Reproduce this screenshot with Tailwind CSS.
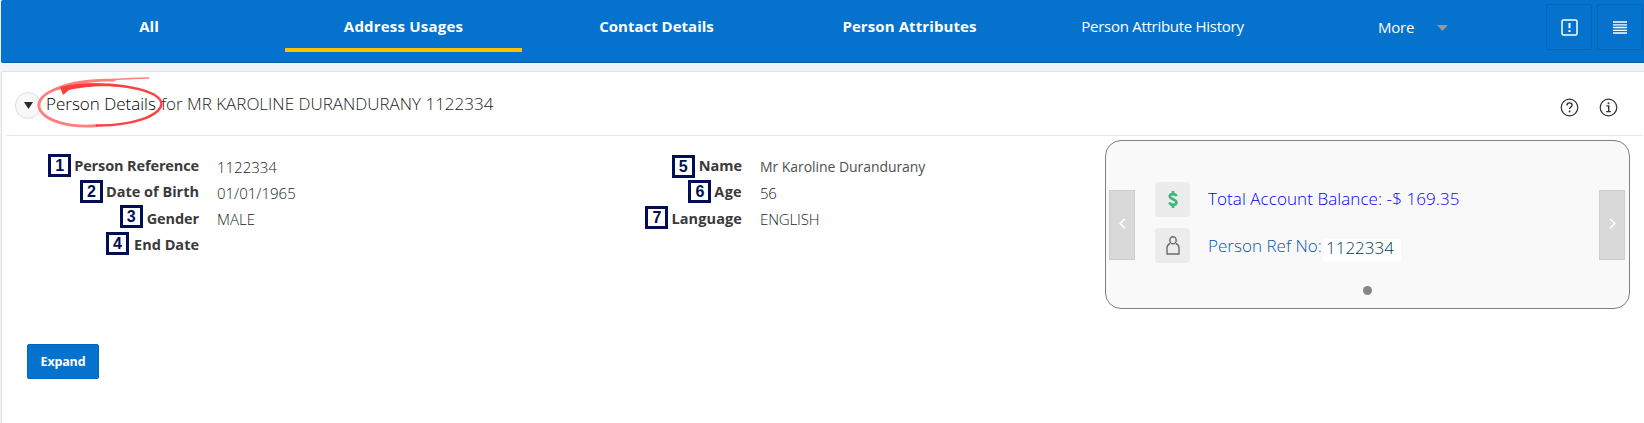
<!DOCTYPE html>
<html lang="en">
  <head>
    <meta charset="UTF-8" />
    <meta name="viewport" content="width=device-width, initial-scale=1.0" />
    <title>Person Details</title>
    <script src="https://cdn.jsdelivr.net/npm/@tailwindcss/browser@4"></script>
  </head>
  <body class="h-[423px] overflow-hidden bg-[#f0f4f9] font-['Open_Sans',sans-serif] text-[15px] text-[#3a3a3a]">
    <!-- Tab bar -->
    <header class="ml-px flex h-[63px] rounded-l-xs border-b border-[#0561ae] bg-[#0572ce] text-white">
      <nav class="ml-[23px] grid w-[1265px] grid-cols-5 text-center font-bold leading-6 whitespace-nowrap">
        <a class="mr-[11px] ml-2 h-[52px] pt-3.5">All</a>
        <a class="mx-2 h-[52px] border-b-4 border-[#ffc000] pt-3.5 tracking-[0.2px]">Address Usages</a>
        <a class="mx-2 h-[52px] pt-3.5">Contact Details</a>
        <a class="mx-2 h-[52px] pt-3.5 tracking-[0.1px]">Person Attributes</a>
        <a class="mx-2 h-[52px] pt-3.5 font-normal tracking-[-0.28px]">Person Attribute History</a>
      </nav>
      <div class="ml-[89px] flex h-6 w-[168px] pt-[15px] leading-6">
        <span class="w-[59px] tracking-[-0.2px]">More</span>
        <svg class="mt-[10px] h-[6px] w-[11px]" viewBox="0 0 11 6"><path d="M0 0h11L5.5 6z" fill="#999" /></svg>
      </div>
      <div class="mt-1 flex gap-[5px]">
        <button class="flex h-[46px] w-[46px] items-center justify-center rounded-xs border border-[#0564b5]">
          <svg class="h-[17px] w-[17px]" viewBox="0 0 17 17" fill="none" stroke="#fff">
            <rect x="1" y="1" width="15" height="15" rx="1.5" stroke-width="1.5" />
            <path d="M8.5 4v5.2M8.5 11v2" stroke-width="2" />
          </svg>
        </button>
        <button class="flex h-[46px] w-[46px] items-center justify-center rounded-xs border border-[#0564b5]">
          <svg class="h-[13px] w-[14px]" viewBox="0 0 14 13" fill="none" stroke="#fff" stroke-width="1.3">
            <path d="M0 1h14M0 3.8h14M0 6.5h14M0 9.3h14M0 12h14" />
          </svg>
        </button>
      </div>
    </header>

    <!-- Person details panel -->
    <main class="mt-2 ml-px h-[352px] rounded-tl-xs border-t border-l border-[#dfe4e7] bg-white">
      <div class="relative ml-1 flex h-[64px] w-[1637px] border-b border-[#e8e8e8]">
        <button class="mt-[20px] ml-[9px] flex h-[27px] w-[26px] items-center justify-center rounded-full border border-[#dcdcdc] bg-[#f8f8f8]">
          <svg class="h-[7px] w-[9px]" viewBox="0 0 9 7"><path d="M0 0h9L4.5 7z" fill="#2b2b2b" /></svg>
        </button>
        <h1 class="mt-[20px] ml-[5px] flex text-[17px] leading-6 font-light whitespace-nowrap text-[#1c1c1c]">
          <span class="w-[115px] text-black">Person Details</span>
          <span class="w-[26px]">for</span>
          <span>MR KAROLINE DURANDURANY 1122334</span>
        </h1>
        <!-- Hand-drawn highlight ring -->
        <svg class="absolute top-[3px] left-[28px] h-[54px] w-[132px]" viewBox="0 0 132 54" fill="none">
          <path d="M28 12C8 18 2 27 6 35C12 46 36 53 64 50.5" stroke="#ff7f7f" stroke-width="2.8" />
          <path d="M28 12C44 6 74 4 115 3" stroke="#ff7f7f" stroke-width="1.6" />
          <path d="M12 18C30 6 56 3 84 4L80 6.5C62 6 46 8 28 14Z" fill="#ff7f7f" />
          <path d="M62 50.5C98 51 126 41 127.5 29C127 16 90 9 62 9.5C48 9.500 38 11 30 14" stroke="#ff4040" stroke-width="2.4" />
          <path d="M26 12C46 7 68 7 90 12C66 10 48 12 35 15L29 20Z" fill="#ff3d3d" />
        </svg>
        <div class="mt-[26px] mr-[25px] ml-auto flex gap-5">
          <svg class="h-[19px] w-[19px]" viewBox="0 0 19 19" fill="none" stroke="#333">
            <circle cx="9.5" cy="9.5" r="8.3" stroke-width="1.2" />
            <path d="M6.9 7.4c0-3.3 5.2-3.3 5.2-.3c0 1.8-2.5 1.9-2.5 4" stroke-width="1.4" />
            <path d="M9.6 12.6v1.7" stroke-width="1.7" />
          </svg>
          <svg class="h-[19px] w-[19px]" viewBox="0 0 19 19" fill="none" stroke="#333">
            <circle cx="9.5" cy="9.5" r="8.3" stroke-width="1.2" />
            <path d="M7.4 7.9h2.3v5.4M7.2 13.6h4.7" stroke-width="1.4" />
            <path d="M9.5 4.4v1.8" stroke-width="1.7" />
          </svg>
        </div>
      </div>

      <div class="flex h-[208px]">
        <dl class="mt-[17px] grid w-[543px] auto-rows-[26px] grid-cols-[197px_1fr] content-start gap-x-[18px] leading-[26px] whitespace-nowrap">
          <dt class="flex items-start justify-end gap-[3px] text-[14.5px] font-bold tracking-[-0.12px]"><b class="mt-px h-[23px] w-[23px] border-[3px] border-[#000f54] text-center font-['Liberation_Sans',sans-serif] text-base leading-[17px] tracking-normal text-[#000f54]">1</b>Person Reference</dt>
          <dd class="mt-px font-light text-[#1c1c1c]">1122334</dd>
          <dt class="flex items-start justify-end gap-[3px] text-[14.5px] font-bold"><b class="mt-px h-[23px] w-[23px] border-[3px] border-[#000f54] text-center font-['Liberation_Sans',sans-serif] text-base leading-[17px] text-[#000f54]">2</b>Date of Birth</dt>
          <dd class="mt-px font-light text-[#1c1c1c]">01/01/1965</dd>
          <dt class="flex items-start justify-end gap-[4px] pt-px text-[14.5px] font-bold tracking-[-0.1px]"><b class="-mt-px h-[23px] w-[23px] border-[3px] border-[#000f54] text-center font-['Liberation_Sans',sans-serif] text-base leading-[17px] tracking-normal text-[#000f54]">3</b>Gender</dt>
          <dd class="mt-px font-light text-[#1c1c1c]">MALE</dd>
          <dt class="flex items-start justify-end gap-[5px] pt-px text-[14.5px] font-bold"><b class="h-[23px] w-[23px] border-[3px] border-[#000f54] text-center font-['Liberation_Sans',sans-serif] text-base leading-[17px] text-[#000f54]">4</b>End Date</dt>
          <dd></dd>
        </dl>
        <dl class="mt-[17px] grid w-[560px] auto-rows-[26px] grid-cols-[197px_1fr] content-start gap-x-[18px] leading-[26px] whitespace-nowrap">
          <dt class="flex items-start justify-end gap-[4px] text-[14.5px] font-bold"><b class="mt-[2px] h-[23px] w-[23px] border-[3px] border-[#000f54] text-center font-['Liberation_Sans',sans-serif] text-base leading-[17px] text-[#000f54]">5</b>Name</dt>
          <dd class="mt-px text-[14px] tracking-[-0.06px] text-[#505050]">Mr Karoline Durandurany</dd>
          <dt class="flex items-start justify-end gap-[3px] text-[14.5px] font-bold tracking-[0.3px]"><b class="mt-px h-[23px] w-[23px] border-[3px] border-[#000f54] text-center font-['Liberation_Sans',sans-serif] text-base leading-[17px] tracking-normal text-[#000f54]">6</b>Age</dt>
          <dd class="mt-px font-light tracking-[-0.3px] text-[#1c1c1c]">56</dd>
          <dt class="flex items-start justify-end gap-[3px] pt-px text-[14.5px] font-bold tracking-[0.1px]"><b class="h-[23px] w-[23px] border-[3px] border-[#000f54] text-center font-['Liberation_Sans',sans-serif] text-base leading-[17px] tracking-normal text-[#000f54]">7</b>Language</dt>
          <dd class="mt-px font-light tracking-[-0.15px] text-[#1c1c1c]">ENGLISH</dd>
        </dl>

        <!-- Carousel card -->
        <section class="mt-1 flex h-[169px] w-[525px] rounded-2xl border border-[#808080] bg-[#f9f9f9] whitespace-nowrap">
          <button class="mt-[49px] ml-[3px] flex h-[70px] w-[26px] items-center justify-center border border-[#cdcdcd] bg-[#d9d9d9]">
            <svg class="-mt-1 h-[11px] w-[7px]" viewBox="0 0 7 11" fill="none" stroke="#fff" stroke-width="1.6"><path d="M6 .8L1.2 5.5L6 10.2" /></svg>
          </button>
          <div class="mt-[41px] ml-[20px] w-[444px] text-[17px] leading-[26px] font-light">
            <div class="flex h-[46px]">
              <span class="flex h-[35px] w-[35px] items-center justify-center rounded bg-[#ececec]">
                <svg class="-mt-px h-[17px] w-[10px]" viewBox="0 0 10 17" fill="none" stroke="#3cb878" stroke-width="2.7">
                  <path d="M8.4 5.2C7.6 2.3 1.8 2.3 1.8 5.3c0 3.3 6.6 2.5 6.6 6.1c0 3.4-6.2 3.2-6.9 0" />
                  <path d="M5 0v3M5 13.6v3.4" />
                </svg>
              </span>
              <span class="mt-[4px] ml-[18px] tracking-[0.08px] text-[#0000ff]">Total Account Balance: -$ 169.35</span>
            </div>
            <div class="flex">
              <span class="flex h-[35px] w-[35px] items-center justify-center rounded bg-[#ececec]">
                <svg class="-mt-px h-[19px] w-[14px]" viewBox="0 0 14 19" fill="none" stroke="#6b6b6b" stroke-width="1.4">
                  <ellipse cx="7" cy="4.3" rx="3.2" ry="3.6" />
                  <path d="M4 7.5C2 8.5 1 10 1 12v6h12v-6c0-2-1-3.5-3-4.5" />
                </svg>
              </span>
              <span class="mt-[5px] ml-[18px] w-[115px] tracking-[0.03px] text-[#0058b8]">Person Ref No:</span>
              <span class="mt-[11px] h-[22px] w-[78px] bg-white pl-[3px] leading-[17px] text-[#003a50]">1122334</span>
            </div>
            <span class="mt-[23px] ml-[208px] block h-[9px] w-[9px] rounded-full bg-[#868686]"></span>
          </div>
          <button class="mt-[49px] flex h-[70px] w-[26px] items-center justify-center border border-[#cdcdcd] bg-[#d9d9d9]">
            <svg class="-mt-1 h-[11px] w-[7px]" viewBox="0 0 7 11" fill="none" stroke="#fff" stroke-width="1.6"><path d="M1 .8L5.8 5.5L1 10.2" /></svg>
          </button>
        </section>
      </div>

      <button class="ml-[25px] h-[35px] w-[72px] rounded-xs border border-[#0564b5] bg-[#0572ce] pt-0.5 text-[12.5px] font-bold tracking-[-0.15px] text-white">Expand</button>
    </main>
  </body>
</html>
